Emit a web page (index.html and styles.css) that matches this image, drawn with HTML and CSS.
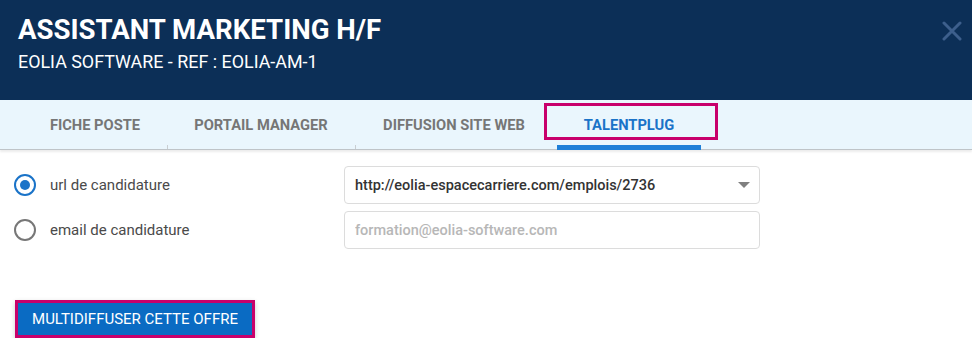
FILE: index.html
```html
<!DOCTYPE html>
<html lang="fr">

<head>
    <meta charset="UTF-8">
    <meta name="viewport" content="width=device-width, initial-scale=1.0">
    <title>Assistant Marketing H/F</title>
    <link rel="stylesheet" href="styles.css">
</head>

<body>
    <header class="offer-header">
        <div class="offer-titles">
            <h1>ASSISTANT MARKETING H/F</h1>
            <p>EOLIA SOFTWARE - REF : EOLIA-AM-1</p>
        </div>
        <button class="close-btn" aria-label="Fermer">
            <svg width="20" height="20" viewBox="0 0 20 20">
                <path d="M2 2 L18 18 M18 2 L2 18" stroke="#3d5f8c" stroke-width="3" stroke-linecap="round" fill="none" />
            </svg>
        </button>
    </header>

    <nav class="tabs">
        <a class="tab tab-fiche">FICHE POSTE</a>
        <a class="tab tab-portail">PORTAIL MANAGER</a>
        <a class="tab tab-site">DIFFUSION SITE WEB</a>
        <a class="tab tab-talent active">TALENTPLUG<span class="highlight"></span></a>
    </nav>

    <section class="diffusion-form">
        <div class="form-row">
            <label class="radio-label">
                <input type="radio" name="mode" checked>
                <span>url de candidature</span>
            </label>
            <div class="select-box">
                <span>http://eolia-espacecarriere.com/emplois/2736</span>
                <span class="caret"></span>
            </div>
        </div>

        <div class="form-row">
            <label class="radio-label">
                <input type="radio" name="mode">
                <span>email de candidature</span>
            </label>
            <input class="text-input" type="text" placeholder="formation@eolia-software.com">
        </div>

        <div class="actions">
            <button class="primary-btn">MULTIDIFFUSER CETTE OFFRE</button>
        </div>
    </section>
</body>

</html>
```

FILE: styles.css
```css
body {
    font-family: Roboto, 'Liberation Sans', Arial, sans-serif;
    margin: 0;
    padding: 0;
    background-color: #fff;
}

.offer-header {
    background-color: #0c2f57;
    color: #fff;
    height: 100px;
    box-sizing: border-box;
    padding: 14px 10px 0 18px;
    display: flex;
    justify-content: space-between;
    align-items: flex-start;
}

.offer-header h1 {
    margin: 0;
    font-size: 27.6px;
    line-height: 32px;
    font-weight: 700;
}

.offer-header p {
    margin: 6px 0 0;
    font-size: 17.9px;
    line-height: 20px;
}

.close-btn {
    background: none;
    border: none;
    padding: 0;
    margin-top: 7px;
    width: 20px;
    height: 20px;
    cursor: pointer;
}

.tabs {
    height: 50px;
    background-color: #eaf6fd;
    border-bottom: 1px solid #bfc4c8;
    box-shadow: 0 2px 2px rgba(0, 0, 0, 0.08);
    display: flex;
    padding-left: 23px;
    box-sizing: border-box;
}

.tab {
    position: relative;
    display: flex;
    align-items: center;
    justify-content: center;
    font-size: 14.7px;
    font-weight: 700;
    color: #767676;
    cursor: pointer;
}

.tab-fiche {
    width: 144px;
}

.tab-portail {
    width: 188px;
}

.tab-site {
    width: 198px;
    padding-right: 4px;
}

.tab-talent {
    width: 144px;
}

.tab + .tab::before {
    content: "";
    position: absolute;
    left: 0;
    bottom: 0;
    width: 1px;
    height: 4px;
    background-color: #c9ced2;
}

.tab.active {
    color: #1a73c8;
}

.tab.active::after {
    content: "";
    position: absolute;
    left: 0;
    right: 0;
    bottom: -1px;
    height: 5px;
    background-color: #1f7fd8;
}

.tab.active::before {
    display: none;
}

.highlight {
    position: absolute;
    left: -13px;
    top: 3px;
    width: 174px;
    height: 37px;
    box-sizing: border-box;
    border: 3px solid #c8006b;
}

.diffusion-form {
    padding: 16px 212px 0 14px;
}

.form-row {
    display: flex;
    align-items: center;
    margin-bottom: 7px;
}

.radio-label {
    display: flex;
    align-items: center;
    width: 330px;
    font-size: 15px;
    color: #4a4a4a;
    cursor: pointer;
}

.radio-label input {
    appearance: none;
    margin: 0 14px 0 0;
    width: 22px;
    height: 22px;
    border: 2px solid #777;
    border-radius: 50%;
    box-sizing: border-box;
    display: grid;
    place-content: center;
}

.radio-label input:checked {
    border-color: #1a73c8;
}

.radio-label input:checked::after {
    content: "";
    width: 10px;
    height: 10px;
    border-radius: 50%;
    background-color: #1a73c8;
}

.select-box,
.text-input {
    flex: 1;
    height: 38px;
    box-sizing: border-box;
    border: 1px solid #dcdcdc;
    border-radius: 4px;
    padding: 0 10px;
    font-family: inherit;
    font-size: 14.5px;
    font-weight: 500;
}

.select-box {
    display: flex;
    align-items: center;
    justify-content: space-between;
    color: #333;
}

.caret {
    width: 0;
    height: 0;
    border-left: 6px solid transparent;
    border-right: 6px solid transparent;
    border-top: 6px solid #808080;
    margin-right: -1px;
}

.text-input {
    color: #333;
}

.text-input::placeholder {
    color: #b7b7b7;
}

.actions {
    margin-top: 51px;
}

.primary-btn {
    background-color: #0a6bc3;
    color: #fff;
    border: 3px solid #c8006b;
    width: 240px;
    height: 38px;
    margin-left: 1px;
    font-family: inherit;
    font-size: 15px;
    font-weight: 400;
    box-shadow: 0 2px 5px rgba(0, 0, 0, 0.2);
    cursor: pointer;
}
```
